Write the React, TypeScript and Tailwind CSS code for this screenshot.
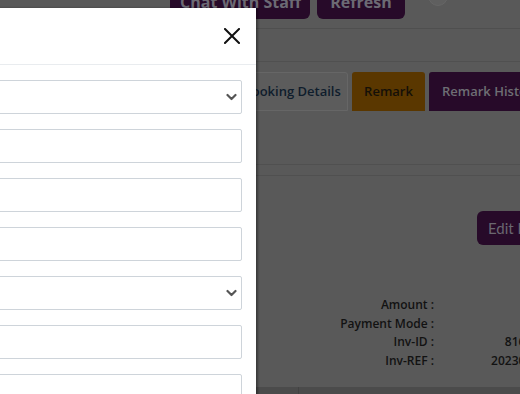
import React from 'react';

const fields: ('select' | 'input')[] = ['select', 'input', 'input', 'input', 'select', 'input', 'input'];

const infoRows = [
  { label: 'Amount :', value: '' },
  { label: 'Payment Mode :', value: '' },
  { label: 'Inv-ID :', value: '816423' },
  { label: 'Inv-REF :', value: '20230512' },
];

const Chevron = () => (
  <svg width="11" height="8" viewBox="0 0 11 8" className="shrink-0">
    <path d="M1.5 2 L5.5 6 L9.5 2" fill="none" stroke="#555" strokeWidth="2.2" strokeLinecap="round" strokeLinejoin="round" />
  </svg>
);

const App: React.FC = () => {
  return (
    <div className="relative w-[520px] h-[394px] overflow-hidden bg-[#595959] font-['Open_Sans',sans-serif]">
      {/* dimmed page behind the modal */}
      <div className="flex flex-col">
        <div className="h-[29px] border-b border-[#4f4f4f] flex items-start pl-[170px]">
          <button className="shrink-0 -mt-[15px] h-[34px] w-[140px] rounded-b-md bg-[#270a29] text-[#6c6a74] font-bold text-[16px] leading-[34px] text-left pl-[10px] whitespace-nowrap overflow-hidden">
            Chat With Staff
          </button>
          <button className="shrink-0 -mt-[15px] ml-[7px] h-[34px] w-[88px] rounded-b-md bg-[#270a29] text-[#6c6a74] font-bold text-[16px] leading-[34px]">
            Refresh
          </button>
          <div className="shrink-0 -mt-[14px] ml-[23px] w-[20px] h-[20px] rounded-full bg-[#5f5f5f] border border-[#666]" />
        </div>
        <div className="h-[33px] border-b border-[#505050]" />
        <div className="mt-[10px] flex gap-[4px] pl-[236px]">
          <div className="shrink-0 h-[39px] w-[112px] rounded-t-[3px] border border-[#666] bg-[#5c5c5c] flex items-center justify-center text-[13px] font-semibold text-[#0f1d2c] whitespace-nowrap">
            Booking Details
          </div>
          <div className="shrink-0 h-[39px] w-[73px] rounded-t-[3px] bg-[#5a3700] flex items-center justify-center text-[13px] font-semibold text-[#151008]">
            Remark
          </div>
          <div className="shrink-0 h-[39px] w-[112px] rounded-t-[3px] bg-[#270a29] flex items-center pl-[13px] text-[13px] font-semibold text-[#6e6e74] whitespace-nowrap">
            Remark History
          </div>
        </div>
        <div className="h-[54px] border-b border-[#505050]" />
        <div className="h-[11px] border-b border-[#505050]" />
        <div className="flex justify-end pt-[35px]">
          <button className="h-[34px] w-[70px] rounded-md bg-[#270a29] text-[#6a6770] text-[15px] font-['Lato',sans-serif] text-left pl-[11px] whitespace-nowrap -mr-[27px]">
            Edit Info
          </button>
        </div>
        <div className="mt-[51px] grid grid-cols-[178px_112px] text-[12px] font-semibold leading-[18.7px] text-[#121212] pl-[256px]">
          {infoRows.map((r) => (
            <React.Fragment key={r.label}>
              <div className="text-right whitespace-nowrap">{r.label}</div>
              <div className="text-right whitespace-nowrap">{r.value}</div>
            </React.Fragment>
          ))}
        </div>
        <div className="mt-[16px] h-[20px] bg-[#4b4b4b] ml-[256px] flex">
          <div className="w-[43px] border-r border-[#424242]" />
        </div>
      </div>

      {/* modal */}
      <div className="absolute top-[8px] left-[-144px] w-[400px] h-[420px] bg-white shadow-[2px_0_2px_rgba(0,0,0,0.35)]">
        <div className="h-[57px] border-b border-[#e9ecef] flex items-center justify-end pr-[16px]">
          <svg width="16" height="16" viewBox="0 0 16 16">
            <path d="M1 1 L15 15 M15 1 L1 15" stroke="#111" strokeWidth="2" strokeLinecap="square" />
          </svg>
        </div>
        <div className="pt-[15px] px-[14px] flex flex-col gap-[15px]">
          {fields.map((f, i) => (
            <div
              key={i}
              className="h-[34px] border border-[#ced4da] rounded-[2px] bg-white flex items-center justify-end pr-[4px]"
            >
              {f === 'select' && <Chevron />}
            </div>
          ))}
        </div>
      </div>
    </div>
  );
};

export default App;
